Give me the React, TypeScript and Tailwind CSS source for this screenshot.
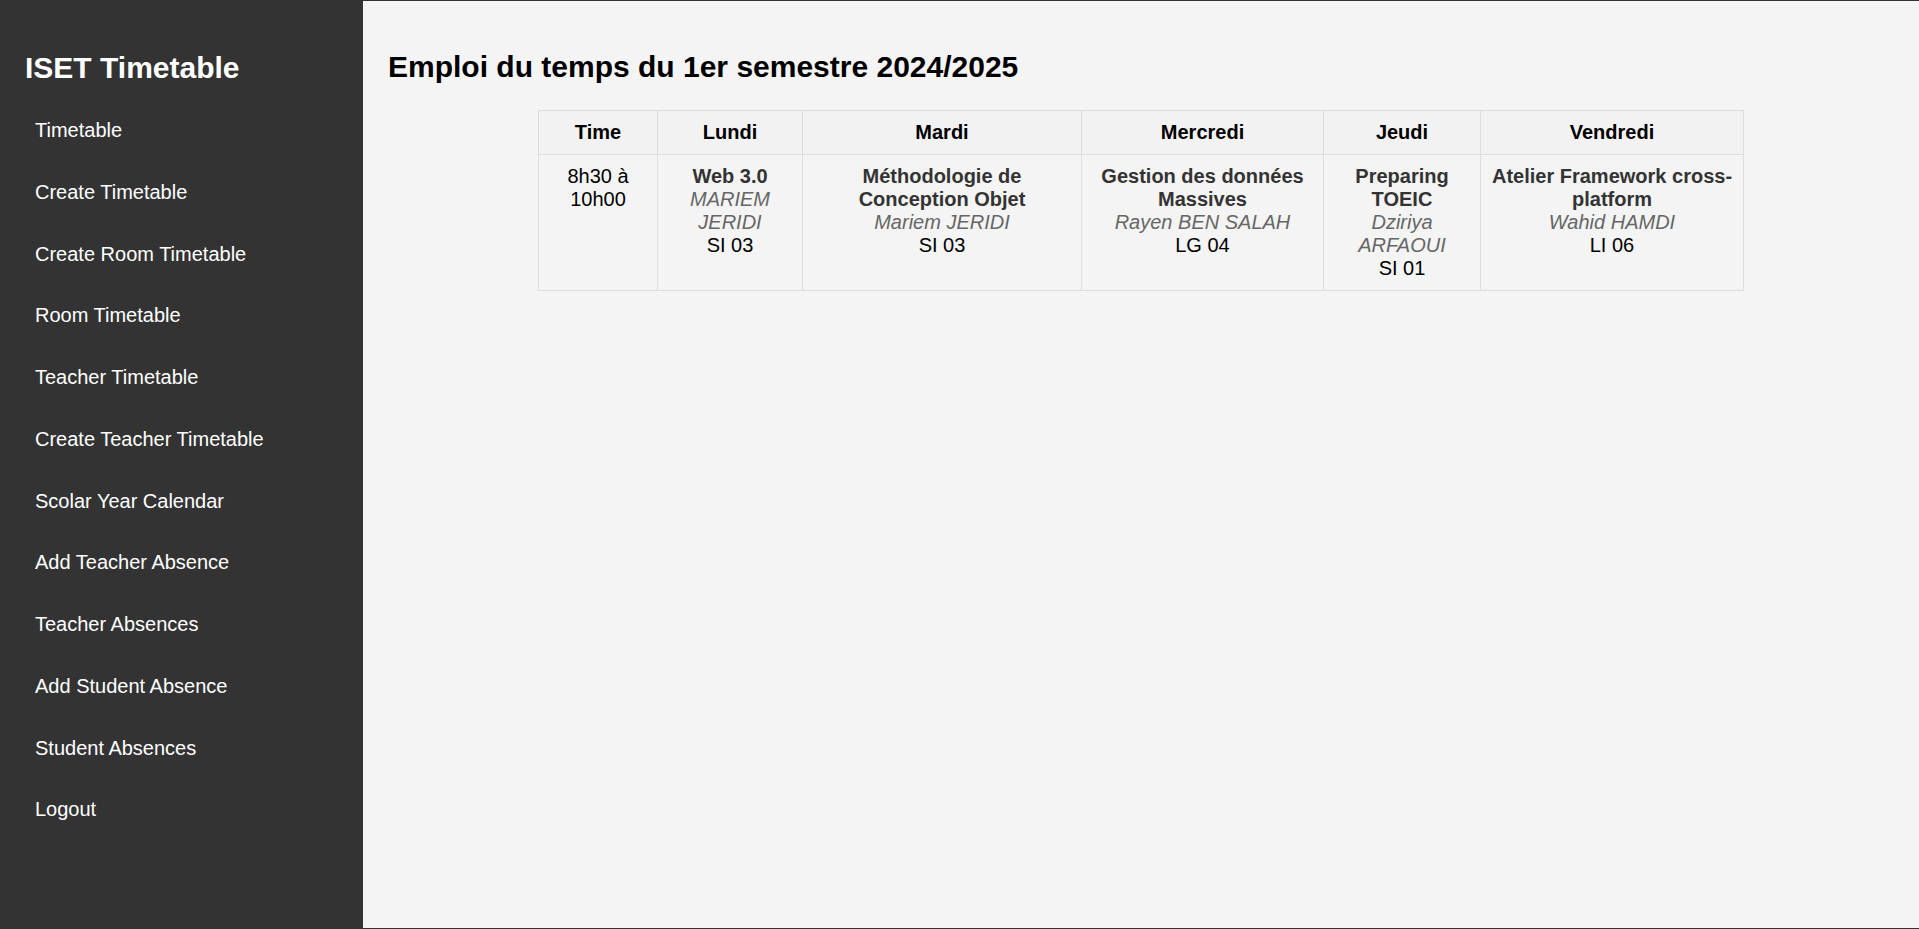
import React from 'react';

const navItems = [
  'Timetable',
  'Create Timetable',
  'Create Room Timetable',
  'Room Timetable',
  'Teacher Timetable',
  'Create Teacher Timetable',
  'Scolar Year Calendar',
  'Add Teacher Absence',
  'Teacher Absences',
  'Add Student Absence',
  'Student Absences',
  'Logout',
];

const days = [
  { name: 'Lundi', width: 'w-[145px]' },
  { name: 'Mardi', width: 'w-[279px]' },
  { name: 'Mercredi', width: 'w-[242px]' },
  { name: 'Jeudi', width: 'w-[157px]' },
  { name: 'Vendredi', width: 'w-[263px]' },
];

const sessions = [
  { subject: 'Web 3.0', teacher: 'MARIEM JERIDI', room: 'SI 03' },
  { subject: 'Méthodologie de Conception Objet', teacher: 'Mariem JERIDI', room: 'SI 03' },
  { subject: 'Gestion des données Massives', teacher: 'Rayen BEN SALAH', room: 'LG 04' },
  { subject: 'Preparing TOEIC', teacher: 'Dziriya ARFAOUI', room: 'SI 01' },
  { subject: 'Atelier Framework cross-platform', teacher: 'Wahid HAMDI', room: 'LI 06' },
];

const Sidebar = () => (
  <aside className="w-[363px] shrink-0 bg-[#333] p-[25px] text-white">
    <h2 className="mt-[25px] mb-[23.5px] text-[30px] font-bold leading-[34.5px]">ISET Timetable</h2>
    <ul className="flex flex-col gap-[18.75px]">
      {navItems.map((item) => (
        <li key={item}>
          <a href="#" className="block px-[10px] py-[10px] text-[20px] leading-[23px] text-white">
            {item}
          </a>
        </li>
      ))}
    </ul>
  </aside>
);

export default function App() {
  return (
    <div
      className="flex h-[929px] border-y border-[#333] bg-[#f4f4f4] text-black"
      style={{ fontFamily: '"Liberation Sans", Arial, sans-serif' }}
    >
      <Sidebar />
      <main className="flex-1 p-[25px] pt-[24px]">
        <h2 className="my-[25px] text-[30px] font-bold leading-[34.5px]">
          Emploi du temps du 1er semestre 2024/2025
        </h2>
        <table className="mx-auto w-[1205px] table-fixed border-collapse text-[20px] leading-[23px]">
          <thead>
            <tr className="bg-[#f2f2f2]">
              <th className="w-[119px] border border-[#ddd] p-[10px] text-center font-bold">Time</th>
              {days.map((d) => (
                <th key={d.name} className={`${d.width} border border-[#ddd] p-[10px] text-center font-bold`}>
                  {d.name}
                </th>
              ))}
            </tr>
          </thead>
          <tbody>
            <tr>
              <td className="border border-[#ddd] p-[10px] text-center align-top">8h30 à 10h00</td>
              {sessions.map((s) => (
                <td key={s.subject} className="border border-[#ddd] p-[10px] text-center align-top">
                  <div className="font-bold text-[#333]">{s.subject}</div>
                  <div className="italic text-[#666]">{s.teacher}</div>
                  <div>{s.room}</div>
                </td>
              ))}
            </tr>
          </tbody>
        </table>
      </main>
    </div>
  );
}
